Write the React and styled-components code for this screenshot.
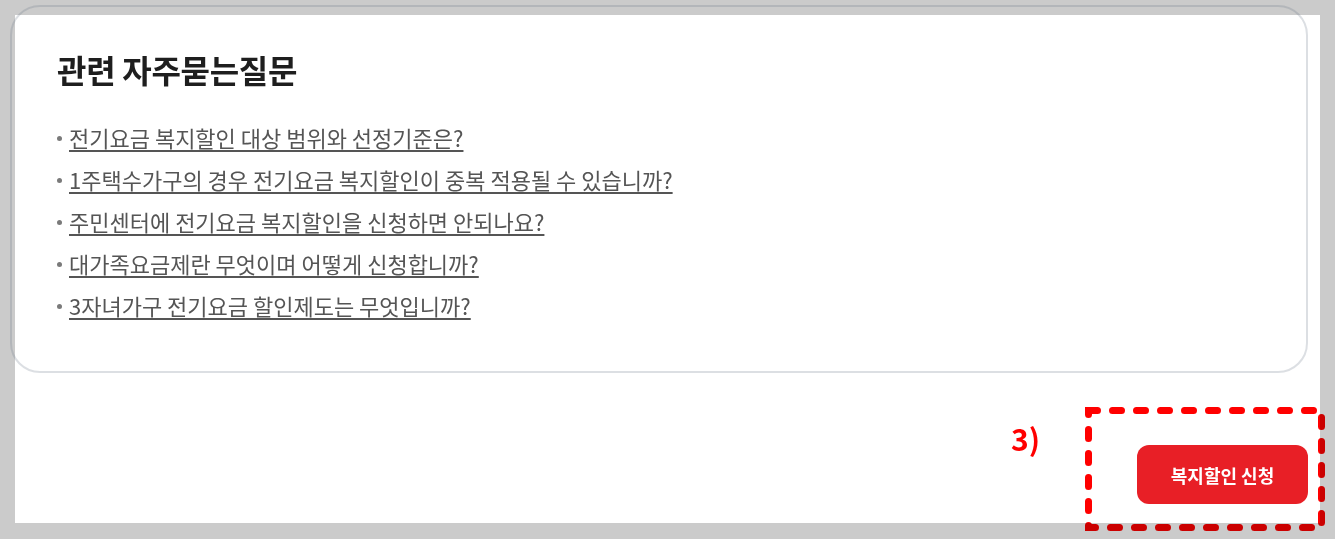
import React from "react";
import styled, { createGlobalStyle } from "styled-components";

const GlobalStyle = createGlobalStyle`
  html, body {
    margin: 0;
    padding: 0;
    background: #cbcbcb;
  }
  body {
    font-family: "Noto Sans CJK KR", "Noto Sans", sans-serif;
  }
  * { box-sizing: border-box; }
`;

const Page = styled.div`
  background: #cbcbcb;
  height: 539px;
  padding: 15px 15px 0 15px;
  overflow: hidden;
`;

const Panel = styled.div`
  height: 508px;
  background: #ffffff;
  display: flex;
  flex-direction: column;
`;

const Card = styled.section`
  margin: -10px 0 0 -5px;
  width: 1298px;
  height: 368px;
  border: 2px solid rgba(95, 108, 128, 0.22);
  border-radius: 30px;
  padding: 38px 45px 0 45px;
`;

const Title = styled.h2`
  margin: 0;
  font-size: 32px;
  line-height: 48px;
  font-weight: 700;
  color: #1e1e1e;
  letter-spacing: -0.3px;
`;

const List = styled.ul`
  list-style: none;
  margin: 28px 0 0 0;
  padding: 0;
  display: flex;
  flex-direction: column;
  gap: 10px;
`;

const Item = styled.li`
  display: flex;
  align-items: center;
  font-size: 22px;
  line-height: 32px;
  color: #555555;

  &::before {
    content: "";
    width: 5px;
    height: 5px;
    border-radius: 50%;
    background: #7a7a7a;
    margin: 3px 7px 0 0;
    flex: none;
  }
`;

const Link = styled.a`
  color: #555555;
  text-decoration: underline;
  text-decoration-thickness: 1.5px;
  text-underline-offset: 3px;
  cursor: pointer;
`;

const Footer = styled.div`
  width: 1293px;
  display: flex;
  justify-content: flex-end;
  margin-top: 72px;
`;

const Annotated = styled.div`
  position: relative;
`;

const Outline = styled.svg`
  position: absolute;
  left: -52px;
  top: -38px;
  width: 240px;
  height: 124px;
  overflow: visible;
  mix-blend-mode: multiply;
  pointer-events: none;
`;

const StepLabel = styled.span`
  position: absolute;
  right: calc(100% + 97px);
  top: -27px;
  font-size: 30px;
  line-height: 40px;
  font-weight: 700;
  color: #ff0000;
  white-space: nowrap;
`;

const ApplyButton = styled.button`
  width: 171px;
  height: 59px;
  border: none;
  border-radius: 12px;
  background: #e81f26;
  color: #ffffff;
  font-family: "Noto Sans CJK KR", "Noto Sans", sans-serif;
  font-size: 18px;
  font-weight: 700;
  cursor: pointer;
`;

const faqs = [
  "전기요금 복지할인 대상 범위와 선정기준은?",
  "1주택수가구의 경우 전기요금 복지할인이 중복 적용될 수 있습니까?",
  "주민센터에 전기요금 복지할인을 신청하면 안되나요?",
  "대가족요금제란 무엇이며 어떻게 신청합니까?",
  "3자녀가구 전기요금 할인제도는 무엇입니까?",
];

export default function App() {
  return (
    <>
      <GlobalStyle />
      <Page>
        <Panel>
          <Card>
            <Title>관련 자주묻는질문</Title>
            <List>
              {faqs.map((q) => (
                <Item key={q}>
                  <Link>{q}</Link>
                </Item>
              ))}
            </List>
          </Card>
          <Footer>
            <Annotated>
              <StepLabel>3)</StepLabel>
              <ApplyButton>복지할인 신청</ApplyButton>
              <Outline viewBox="0 0 240 124">
                <rect
                  x="3.5"
                  y="3.5"
                  width="233"
                  height="117"
                  fill="none"
                  stroke="#ff0000"
                  strokeWidth="7"
                  strokeLinecap="round"
                  strokeDasharray="9 15"
                />
              </Outline>
            </Annotated>
          </Footer>
        </Panel>
      </Page>
    </>
  );
}
